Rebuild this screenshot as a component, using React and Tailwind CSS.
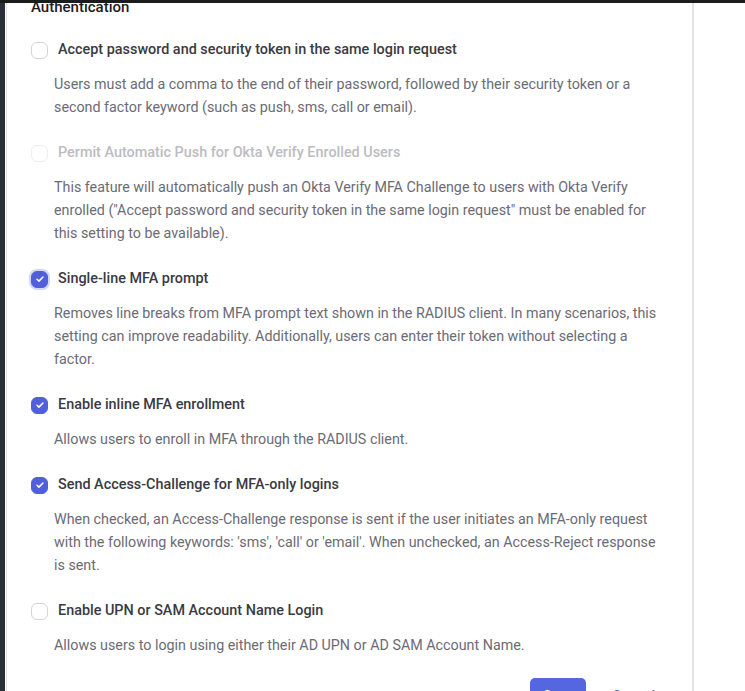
import React, { useState } from 'react';

const options = [
  {
    id: 'combined',
    label: 'Accept password and security token in the same login request',
    desc: 'Users must add a comma to the end of their password, followed by their security token or a second factor keyword (such as push, sms, call or email).',
    checked: false,
  },
  {
    id: 'autopush',
    label: 'Permit Automatic Push for Okta Verify Enrolled Users',
    desc: 'This feature will automatically push an Okta Verify MFA Challenge to users with Okta Verify enrolled ("Accept password and security token in the same login request" must be enabled for this setting to be available).',
    checked: false,
    disabled: true,
  },
  {
    id: 'singleline',
    label: 'Single-line MFA prompt',
    desc: 'Removes line breaks from MFA prompt text shown in the RADIUS client. In many scenarios, this setting can improve readability. Additionally, users can enter their token without selecting a factor.',
    checked: true,
    focused: true,
  },
  {
    id: 'inline',
    label: 'Enable inline MFA enrollment',
    desc: 'Allows users to enroll in MFA through the RADIUS client.',
    checked: true,
  },
  {
    id: 'challenge',
    label: 'Send Access-Challenge for MFA-only logins',
    desc: "When checked, an Access-Challenge response is sent if the user initiates an MFA-only request with the following keywords: 'sms', 'call' or 'email'. When unchecked, an Access-Reject response is sent.",
    checked: true,
  },
  {
    id: 'upn',
    label: 'Enable UPN or SAM Account Name Login',
    desc: 'Allows users to login using either their AD UPN or AD SAM Account Name.',
    checked: false,
  },
];

const Checkbox = ({ checked, disabled, focused, onClick }) => (
  <button
    onClick={onClick}
    disabled={disabled}
    className={
      'w-[17px] h-[17px] shrink-0 rounded-[6px] flex items-center justify-center ' +
      (checked
        ? 'bg-[#5060dc] border border-[#5060dc]'
        : disabled
        ? 'bg-white border border-[#eeeef0]'
        : 'bg-white border border-[#d4d4d8]') +
      (focused ? ' shadow-[0_0_0_2px_rgba(80,96,220,0.25)]' : '')
    }
  >
    {checked && (
      <svg viewBox="0 0 16 16" className="w-3 h-3">
        <path d="M4 8.3l2.6 2.5L12 5.4" fill="none" stroke="white" strokeWidth="2" strokeLinecap="round" strokeLinejoin="round" />
      </svg>
    )}
  </button>
);

export default function App() {
  const [values, setValues] = useState(
    Object.fromEntries(options.map((o) => [o.id, o.checked]))
  );

  return (
    <div className="w-[745px] h-[691px] overflow-hidden bg-white flex flex-col font-['Roboto',sans-serif]">
      <div className="h-[3px] bg-[#1c1c1c] shrink-0" />
      <div className="flex flex-1 min-h-0">
        <div className="w-[5px] bg-[#2a3038] shrink-0" />
        <div className="w-[688px] ml-px border-l border-r-2 border-[#e3e3e6] pl-6 pr-6 overflow-hidden">
          <h2 className="-mt-[8px] text-[15px] leading-6 font-medium text-[#1d1d21]">Authentication</h2>

          <div className="mt-[21px] flex flex-col gap-6">
            {options.map((o) => (
              <div key={o.id}>
                <div className="flex items-center gap-[10px] h-5">
                  <Checkbox
                    checked={values[o.id]}
                    disabled={o.disabled}
                    focused={o.focused}
                    onClick={() => setValues((v) => ({ ...v, [o.id]: !v[o.id] }))}
                  />
                  <span
                    className={
                      'text-[14.4px] font-medium ' +
                      (o.disabled ? 'text-[#bcbcc2]' : 'text-[#3a3a42]')
                    }
                  >
                    {o.label}
                  </span>
                </div>
                <p className="mt-[13px] ml-[23px] w-[610px] text-[14.3px] leading-[23px] text-[#6b6b75]">
                  {o.desc}
                </p>
              </div>
            ))}
          </div>

          <div className="mt-[21px] flex items-center justify-end gap-[26px] pr-[13px]">
            <button className="w-[56px] h-9 rounded-[5px] bg-[#5467e0] text-white text-[14px] font-medium">
              Save
            </button>
            <button className="text-[14px] font-medium text-[#5467e0]">Cancel</button>
          </div>
        </div>
      </div>
    </div>
  );
}
